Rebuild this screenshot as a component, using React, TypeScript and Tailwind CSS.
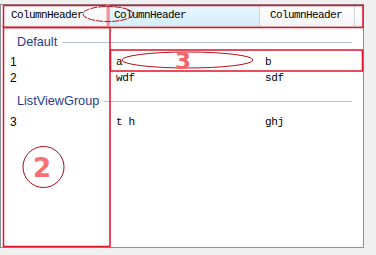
import React from "react";

const cols = [109, 150, 95];

const mono = { fontFamily: '"Liberation Mono", "DejaVu Sans Mono", monospace' };

function HeaderCell({ label, width, hot }: { label: string; width: number; hot?: boolean }) {
  return (
    <div
      className={
        "flex h-full shrink-0 items-center border-r border-[#d5d5d5] text-[11px] tracking-[-0.6px] text-black " +
        (hot ? "bg-gradient-to-b from-[#eaf7fd] to-[#d3eefa] pl-[4px]" : "bg-gradient-to-b from-white to-[#f4f5f7] pl-[10px]")
      }
      style={{ width, ...mono }}
    >
      {label}
    </div>
  );
}

function Group({ title, h, pt }: { title: string; h: string; pt: string }) {
  return (
    <div className={"flex items-center pl-[16px] pr-[11px] " + h + " " + pt}>
      <span className="text-[12.7px] leading-none text-[#1f3b8e] [font-family:'Liberation_Sans',Arial,sans-serif]">
        {title}
      </span>
      <div className="ml-[5px] h-px flex-1 bg-[#b9c3d8]" />
    </div>
  );
}

function Row({ cells }: { cells: string[] }) {
  return (
    <div className="flex h-[16px] items-center">
      <div className="shrink-0 pl-[9px] text-[12px] text-black [font-family:'Liberation_Sans',Arial,sans-serif]" style={{ width: cols[0] }}>
        {cells[0]}
      </div>
      <div className="shrink-0 pl-[6px] text-[11px] tracking-[-0.3px] text-black" style={{ width: cols[1], ...mono }}>
        {cells[1]}
      </div>
      <div className="shrink-0 pl-[5px] text-[11px] tracking-[-0.3px] text-black" style={{ width: cols[2], ...mono }}>
        {cells[2]}
      </div>
    </div>
  );
}

function Marks() {
  return (
    <svg className="pointer-events-none absolute inset-0" width={376} height={255}>
      {/* header box */}
      <rect x={3.5} y={5.5} width={359.5} height={22} fill="none" stroke="#e3122b" strokeWidth={1.5} />
      {/* first column box */}
      <rect x={3.5} y={27.5} width={106.5} height={219} fill="none" stroke="#e3122b" strokeWidth={1.5} />
      {/* row box */}
      <rect x={110.5} y={50} width={252} height={21} fill="none" stroke="#e3122b" strokeWidth={1.5} />
      {/* separator mark */}
      <line x1={108} y1={4} x2={108} y2={27} stroke="#f27b86" strokeWidth={3} opacity={0.8} />
      <ellipse cx={108} cy={14} rx={25} ry={7.5} fill="none" stroke="#b3101e" strokeWidth={1} strokeDasharray="7 1" />
      {/* row ellipse */}
      <ellipse cx={187.5} cy={60} rx={65.5} ry={8} fill="none" stroke="#b3101e" strokeWidth={1} />
      {/* circle 2 */}
      <circle cx={43.5} cy={167} r={20.5} fill="none" stroke="#a80c1c" strokeWidth={1} />
      <text x={33} y={177} fontSize={26} fontWeight={700} fill="#f47276" fontFamily="'DejaVu Sans', sans-serif">
        2
      </text>
      <text x={175} y={69} fontSize={23} fontWeight={700} fill="#f46468" fontFamily="'DejaVu Sans', sans-serif">
        3
      </text>
    </svg>
  );
}

export default function App() {
  return (
    <div className="relative h-[255px] w-[376px] overflow-hidden bg-[#f0f0f0] pt-[4px]">
      <div className="h-[244px] w-[364px] border border-[#8a8e96] bg-white">
        {/* Column headers */}
        <div className="flex h-[22px] border-b border-[#d5d5d5]">
          <HeaderCell label="ColumnHeader" width={cols[0]} />
          <HeaderCell label="ColumnHeader" width={cols[1]} hot />
          <HeaderCell label="ColumnHeader" width={cols[2]} />
          <div className="h-full flex-1 bg-gradient-to-b from-white to-[#f4f5f7]" />
        </div>

        <Group title="Default" h="h-[27px]" pt="pt-[3px]" />
        <Row cells={["1", "a", "b"]} />
        <Row cells={["2", "wdf", "sdf"]} />
        <Group title="ListViewGroup" h="h-[28px]" pt="pt-[2px]" />
        <Row cells={["3", "t h", "ghj"]} />
      </div>
      <Marks />
    </div>
  );
}
